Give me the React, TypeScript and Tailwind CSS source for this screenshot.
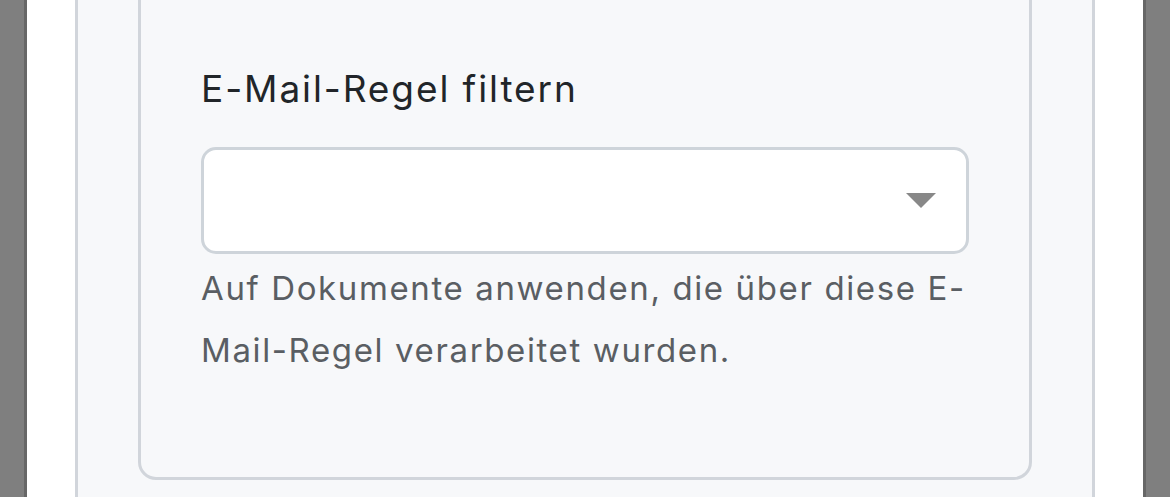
export default function App() {
  return (
    <div
      className="h-[497px] overflow-hidden bg-[#7f7f7f] px-[24px]"
      style={{ fontFamily: 'Inter, "Noto Sans", sans-serif' }}
    >
      <div className="flex h-full flex-col border-x-[3px] border-[#676767] bg-white px-[48px]">
        <div className="flex h-full flex-col border-x-[3px] border-[#d1d5db] bg-[#f7f8fa] px-[60px]">
          <div className="-mt-[40px] rounded-[18px] border-[3px] border-[#d1d5db] bg-[#f7f8fa] px-[60px] pb-[96px] pt-[102px]">
            <label className="block text-[37px] leading-[48px] tracking-[1.9px] text-[#212529]">
              E-Mail-Regel filtern
            </label>
            <div className="mt-[34px] flex h-[107px] items-center justify-end rounded-[15px] border-[3px] border-[#ced4da] bg-white pr-[30px]">
              <svg width="30" height="15" viewBox="0 0 30 15">
                <path d="M0 0 L30 0 L15 15 Z" fill="#888888" />
              </svg>
            </div>
            <p className="mt-[3px] text-[33px] leading-[62px] tracking-[1.62px] text-[#5a5e63]">
              Auf Dokumente anwenden, die über diese E-Mail-Regel verarbeitet wurden.
            </p>
          </div>
        </div>
      </div>
    </div>
  )
}
